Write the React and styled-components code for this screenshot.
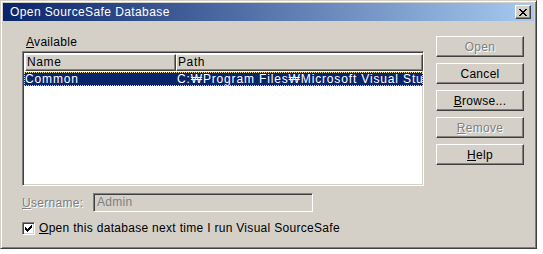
import React from "react";
import styled, { createGlobalStyle } from "styled-components";

const GlobalStyle = createGlobalStyle`
  html, body { margin: 0; padding: 0; background: #ffffff; }
  body { font-family: "Liberation Sans", Arial, sans-serif; font-size: 12px; }
  * { box-sizing: border-box; }
`;

const FONT = `"Liberation Sans", Arial, sans-serif`;

const Window = styled.div`
  width: 537px;
  height: 249px;
  background: #d4d0c8;
  border: 1px solid;
  border-color: #d4d0c8 #404040 #404040 #d4d0c8;
  box-shadow: inset 1px 1px #ffffff, inset -1px -1px #808080;
  padding: 2px;
  display: flex;
  flex-direction: column;
  font-family: ${FONT};
  font-size: 12px;
  letter-spacing: 0.3px;
  color: #000;
`;

const TitleBar = styled.div`
  height: 18px;
  background: linear-gradient(to right, #0a246a, #a6caf0);
  display: flex;
  align-items: center;
  justify-content: space-between;
  padding: 0 3px 0 7px;
`;

const TitleText = styled.span`
  color: #ffffff;
  font-size: 12px;
  letter-spacing: 0.4px;
  line-height: 18px;
`;

const CloseButton = styled.div`
  width: 16px;
  height: 14px;
  background: #d4d0c8;
  border: 1px solid;
  border-color: #ffffff #404040 #404040 #ffffff;
  box-shadow: inset -1px -1px #808080;
  display: flex;
  align-items: center;
  justify-content: center;
`;

const Body = styled.div`
  flex: 1;
  display: flex;
  gap: 12px;
  padding: 14px 10px 0 19px;
`;

const LeftColumn = styled.div`
  width: 402px;
  display: flex;
  flex-direction: column;
`;

const GroupLabel = styled.div`
  height: 16px;
  line-height: 14px;
  padding-left: 4px;
`;

const U = styled.span`
  text-decoration: underline;
  text-underline-offset: 1px;
`;

const ListView = styled.div`
  height: 135px;
  background: #ffffff;
  border: 1px solid;
  border-color: #808080 #ffffff #ffffff #808080;
  box-shadow: inset 1px 1px #404040, inset -1px -1px #d4d0c8;
  padding: 1px 2px 2px 1px;
  overflow: hidden;
`;

const HeaderRow = styled.div`
  display: flex;
  height: 17px;
  width: 398px;
  margin-left: 1px;
  margin-top: 1px;
`;

const HeaderCell = styled.div`
  width: ${(p) => p.$w}px;
  height: 17px;
  background: #d4d0c8;
  border: 1px solid;
  border-color: #ffffff #404040 #404040 #ffffff;
  box-shadow: inset -1px -1px #808080;
  padding: 0 0 0 1px;
  line-height: 14px;
  letter-spacing: 0.6px;
  white-space: nowrap;
  overflow: hidden;
`;

const Row = styled.div`
  display: flex;
  height: 14px;
  width: 399px;
  margin-top: 1px;
  background: ${(p) => (p.$selected ? "#0a246a" : "transparent")};
  color: ${(p) => (p.$selected ? "#ffffff" : "#000")};
  outline: ${(p) => (p.$selected ? "1px dotted #e8d890" : "none")};
  outline-offset: -1px;
  line-height: 14px;
  letter-spacing: 0.85px;
  white-space: nowrap;
  overflow: hidden;
`;

const Cell = styled.div`
  width: ${(p) => p.$w}px;
  flex: ${(p) => (p.$w ? "none" : "1")};
  padding-left: 1px;
  overflow: hidden;
`;

const FieldRow = styled.div`
  display: flex;
  align-items: center;
  margin-top: 7px;
  height: 19px;
`;

const DisabledLabel = styled.span`
  width: 71px;
  color: #808080;
  text-shadow: 1px 1px #ffffff;
`;

const TextBox = styled.div`
  width: 220px;
  height: 19px;
  background: #d4d0c8;
  border: 1px solid;
  border-color: #808080 #ffffff #ffffff #808080;
  box-shadow: inset 1px 1px #404040, inset -1px -1px #d4d0c8;
  color: #808080;
  padding-left: 3px;
  line-height: 17px;
`;

const CheckRow = styled.div`
  display: flex;
  align-items: center;
  gap: 4px;
  margin-top: 9px;
  height: 14px;
`;

const CheckBox = styled.div`
  width: 13px;
  height: 13px;
  background: #ffffff;
  border: 1px solid;
  border-color: #808080 #ffffff #ffffff #808080;
  box-shadow: inset 1px 1px #404040, inset -1px -1px #d4d0c8;
  display: flex;
  align-items: center;
  justify-content: center;
`;

const ButtonColumn = styled.div`
  width: 88px;
  display: flex;
  flex-direction: column;
  gap: 6px;
  margin-top: 1px;
`;

const Button = styled.div`
  height: 21px;
  background: #d4d0c8;
  border: 1px solid;
  border-color: #ffffff #404040 #404040 #ffffff;
  box-shadow: inset -1px -1px #808080;
  display: flex;
  align-items: center;
  justify-content: center;
  color: ${(p) => (p.$disabled ? "#808080" : "#000")};
  text-shadow: ${(p) => (p.$disabled ? "1px 1px #ffffff" : "none")};
`;

export default function App() {
  return (
    <>
      <GlobalStyle />
      <Window>
        <TitleBar>
          <TitleText>Open SourceSafe Database</TitleText>
          <CloseButton>
            <svg width="8" height="7" viewBox="0 0 8 7">
              <path d="M0 0h2v1h1v1h2V1h1V0h2v1H7v1H6v1H5v1h1v1h1v1h1v1H6V6H5V5H3v1H2v1H0V6h1V5h1V4h1V3H2V2H1V1H0z" fill="#000" />
            </svg>
          </CloseButton>
        </TitleBar>
        <Body>
          <LeftColumn>
            <GroupLabel>
              <U>A</U>vailable
            </GroupLabel>
            <ListView>
              <HeaderRow>
                <HeaderCell $w={151}>Name</HeaderCell>
                <HeaderCell $w={247}>Path</HeaderCell>
              </HeaderRow>
              <Row $selected>
                <Cell $w={152}>Common</Cell>
                <Cell>C:₩Program Files₩Microsoft Visual Studio₩Common₩VSS</Cell>
              </Row>
            </ListView>
            <FieldRow>
              <DisabledLabel>
                <U>U</U>sername:
              </DisabledLabel>
              <TextBox>Admin</TextBox>
            </FieldRow>
            <CheckRow>
              <CheckBox>
                <svg width="7" height="7" viewBox="0 0 7 7">
                  <path d="M6 0h1v3H6v1H5v1H4v1H3v1H2V6H1V5H0V2h1v1h1v1h1V3h1V2h1V1h1z" fill="#000" />
                </svg>
              </CheckBox>
              <span>
                <U>O</U>pen this database next time I run Visual SourceSafe
              </span>
            </CheckRow>
          </LeftColumn>
          <ButtonColumn>
            <Button $disabled>Open</Button>
            <Button>Cancel</Button>
            <Button>
              <span>
                <U>B</U>rowse...
              </span>
            </Button>
            <Button $disabled>
              <span>
                <U>R</U>emove
              </span>
            </Button>
            <Button>
              <span>
                <U>H</U>elp
              </span>
            </Button>
          </ButtonColumn>
        </Body>
      </Window>
    </>
  );
}
